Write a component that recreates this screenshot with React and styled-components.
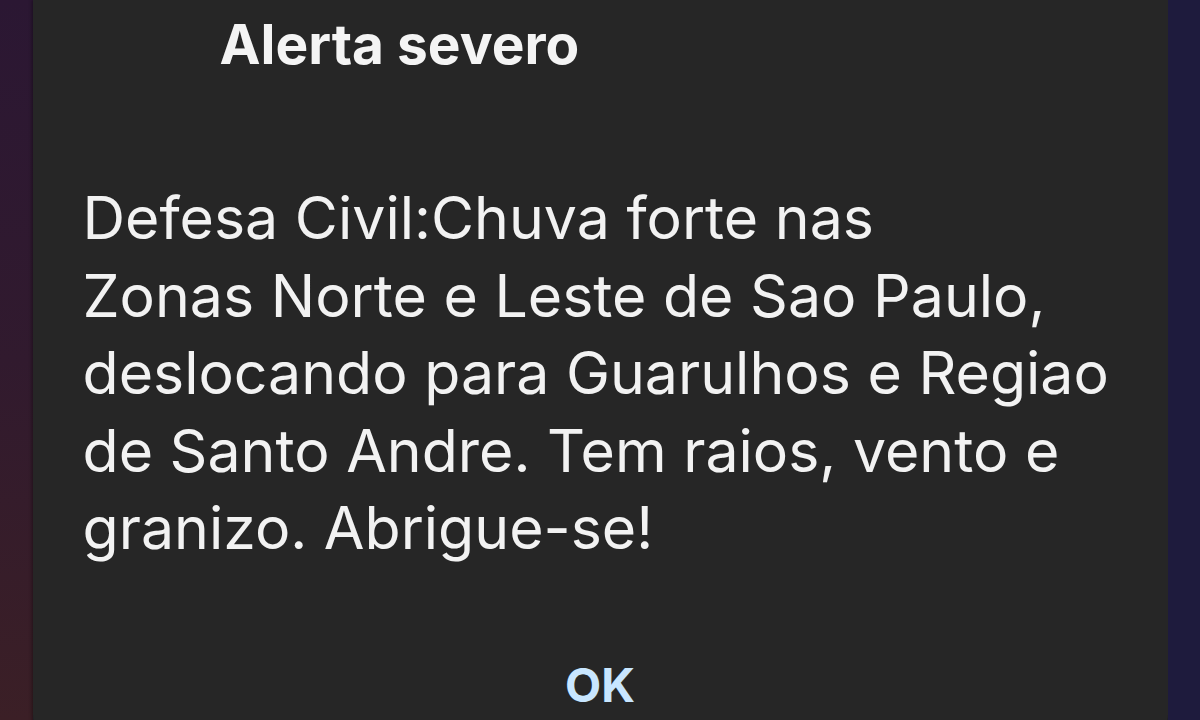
import React from "react";
import styled, { createGlobalStyle } from "styled-components";

const GlobalStyle = createGlobalStyle`
  html, body {
    margin: 0;
    padding: 0;
    width: 1200px;
    height: 720px;
    overflow: hidden;
    background: #1e1b3d;
  }
`;

const alert = {
  title: "Alerta severo",
  lines: [
    "Defesa Civil:Chuva forte nas",
    "Zonas Norte e Leste de Sao Paulo,",
    "deslocando para Guarulhos e Regiao",
    "de Santo Andre. Tem raios, vento e",
    "granizo. Abrigue-se!",
  ],
};

function App() {
  return (
    <Screen>
      <GlobalStyle />
      <SideStrip $side="left" />
      <Dialog>
        <Title>{alert.title}</Title>
        <Message>
          {alert.lines.map((line, index) => (
            <Line key={index}>{line}</Line>
          ))}
        </Message>
        <Actions>
          <OkButton>OK</OkButton>
        </Actions>
      </Dialog>
      <SideStrip $side="right" />
    </Screen>
  );
}

export default App;

const Screen = styled.div`
  display: flex;
  flex-direction: row;
  width: 1200px;
  height: 720px;
  overflow: hidden;
  font-family: Inter, Roboto, sans-serif;
`;

const SideStrip = styled.div`
  flex: 1;
  background: ${(p) =>
    p.$side === "left"
      ? "linear-gradient(180deg, #2b1733 0%, #311a2e 50%, #3b1f26 100%)"
      : "#1e1b3d"};
`;

const Dialog = styled.div`
  width: 1135px;
  height: 770px;
  flex-shrink: 0;
  background: #262626;
  border-radius: 0 0 56px 56px;
  box-shadow: 2px 0 3px rgba(0, 0, 0, 0.35), -2px 0 3px rgba(0, 0, 0, 0.25);
  display: flex;
  flex-direction: column;
  padding: 0 50px;
  box-sizing: border-box;
`;

const Title = styled.div`
  margin-top: 14px;
  padding-left: 137px;
  font-size: 55px;
  line-height: 60px;
  font-weight: 700;
  color: #f4f4f4;
`;

const Message = styled.div`
  margin-top: 105px;
  color: #f2f2f2;
  font-size: 59px;
  line-height: 77.5px;
`;

const Line = styled.div`
  white-space: nowrap;
`;

const Actions = styled.div`
  display: flex;
  justify-content: center;
  margin-top: 88px;
`;

const OkButton = styled.button`
  background: none;
  border: none;
  padding: 0;
  font-family: inherit;
  font-size: 47px;
  font-weight: 700;
  color: #c8e6ff;
  line-height: 60px;
`;
